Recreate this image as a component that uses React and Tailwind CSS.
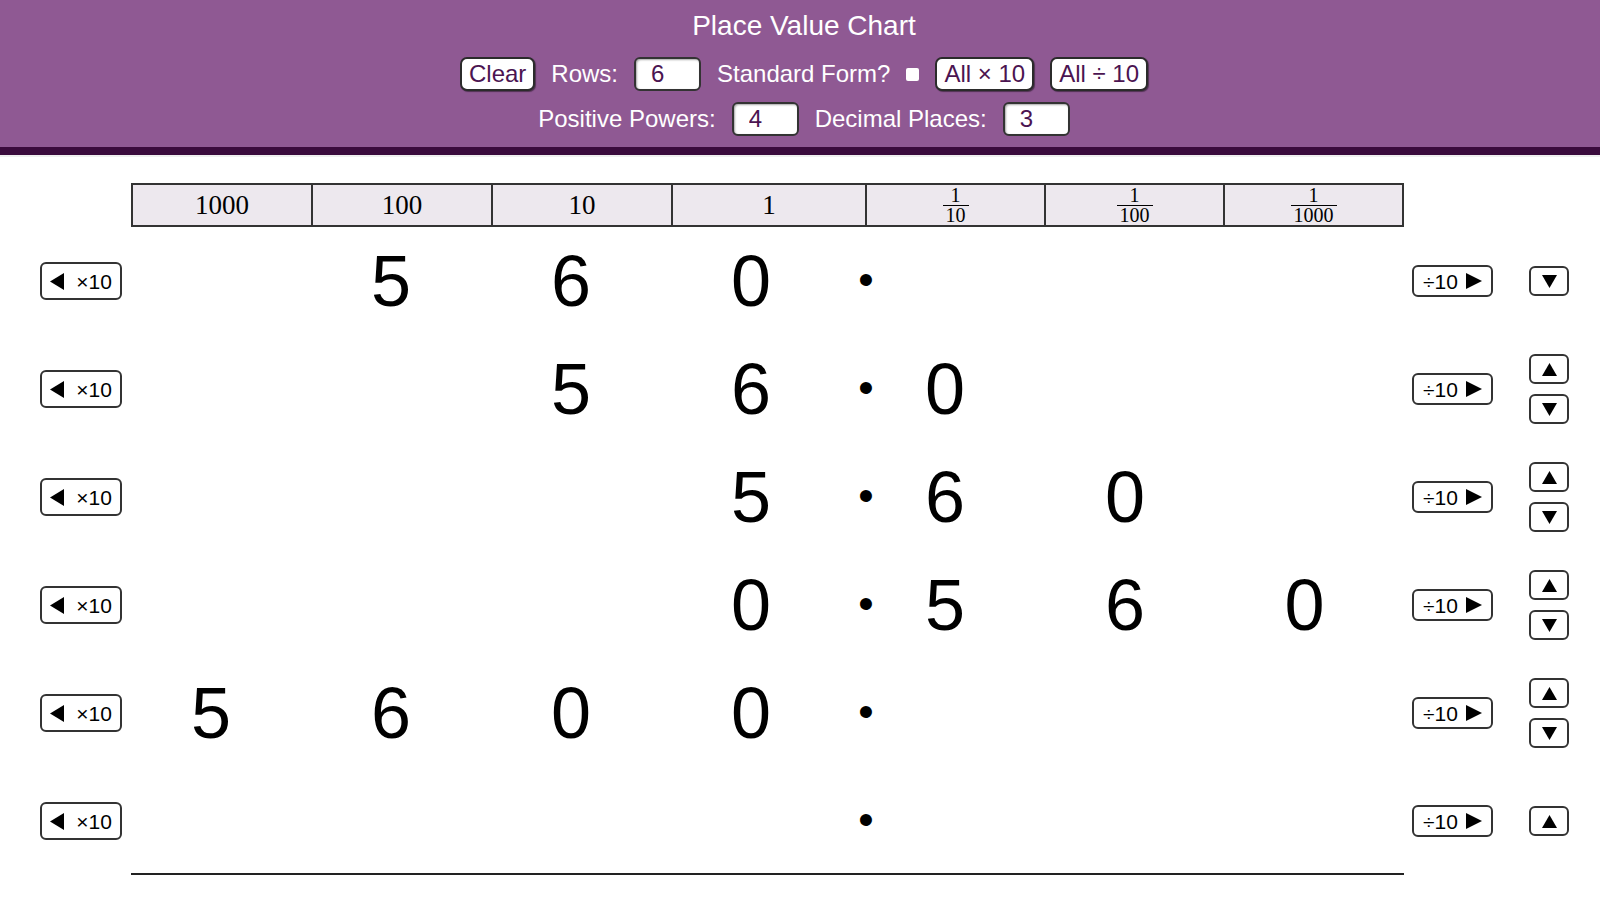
const rows = [
  { digits: ["", "5", "6", "0", "", "", ""], up: false, down: true },
  { digits: ["", "", "5", "6", "0", "", ""], up: true, down: true },
  { digits: ["", "", "", "5", "6", "0", ""], up: true, down: true },
  { digits: ["", "", "", "0", "5", "6", "0"], up: true, down: true },
  { digits: ["5", "6", "0", "0", "", "", ""], up: true, down: true },
  { digits: ["", "", "", "", "", "", ""], up: true, down: false },
];

const HeadButton = ({ children }) => (
  <button
    type="button"
    className="h-[34px] px-[7px] bg-white border-2 border-[#2b2b2b] rounded-[7px] text-[#4b1451] leading-none shadow-[1px_1px_1px_rgba(0,0,0,0.45)]"
  >
    {children}
  </button>
);

const NumInput = ({ value }) => (
  <input
    type="text"
    defaultValue={value}
    className="w-[67px] h-[34px] bg-white border-2 border-[#333] rounded-[6px] pl-[15px] text-[#4b1451] leading-none shadow-[inset_1px_1px_2px_rgba(0,0,0,0.35)] outline-none"
  />
);

const Fraction = ({ den }) => (
  <span className="inline-flex flex-col items-center text-[20px] leading-[15px]">
    <span>1</span>
    <span className="self-stretch h-px bg-black my-[2px] mx-[-3px]" />
    <span>{den}</span>
  </span>
);

const TriLeft = () => (
  <svg width="14" height="17" viewBox="0 0 14 17">
    <polygon points="14,0 14,17 0,8.5" fill="#000" />
  </svg>
);

const TriRight = () => (
  <svg width="16" height="16" viewBox="0 0 16 16">
    <polygon points="0,0 0,16 16,8" fill="#000" />
  </svg>
);

const TriUp = () => (
  <svg width="15" height="13" viewBox="0 0 15 13">
    <polygon points="0,13 15,13 7.5,0" fill="#000" />
  </svg>
);

const TriDown = () => (
  <svg width="15" height="13" viewBox="0 0 15 13">
    <polygon points="0,0 15,0 7.5,13" fill="#000" />
  </svg>
);

const SmallButton = ({ className, children }) => (
  <button
    type="button"
    className={
      "bg-white border-2 border-[#333] rounded-[6px] flex items-center justify-center text-black " +
      className
    }
  >
    {children}
  </button>
);

const ChartRow = ({ row }) => (
  <div className="flex items-center h-[108px]">
    <div className="w-[131px] pl-10">
      <SmallButton className="w-[82px] h-[38px] gap-[12px] text-[21px] leading-none">
        <TriLeft />
        <span>×10</span>
      </SmallButton>
    </div>

    <div className="grid grid-cols-[180px_180px_180px_194px_180px_180px_179px] items-center w-[1273px] h-full text-[72px] leading-none">
      {row.digits.map((d, i) =>
        i === 3 ? (
          <div key={i} className="flex items-center">
            <span className="w-[180px] text-center pr-5">{d}</span>
            <span className="w-[30px] -mr-4 mb-[3px] flex justify-center text-[44px] leading-none">•</span>
          </div>
        ) : (
          <span key={i} className="text-center pr-5">
            {d}
          </span>
        )
      )}
    </div>

    <SmallButton className="ml-2 w-[81px] h-[32px] gap-[8px] text-[21px] leading-none">
      <span>÷10</span>
      <TriRight />
    </SmallButton>

    <div className="ml-9 w-[40px] flex flex-col gap-[10px]">
      {row.up && (
        <SmallButton className="w-[40px] h-[30px]">
          <TriUp />
        </SmallButton>
      )}
      {row.down && (
        <SmallButton className="w-[40px] h-[30px]">
          <TriDown />
        </SmallButton>
      )}
    </div>
  </div>
);

const App = () => {
  return (
    <div className="min-h-screen bg-white font-['Liberation_Sans',Arial,sans-serif]">
      <header className="bg-[#8f5993] pl-2 pt-[10px] pb-3 text-white text-[24px]">
        <h1 className="text-center text-[28px] leading-[32px]">Place Value Chart</h1>

        <div className="mt-[15px] h-[34px] flex items-center justify-center gap-4">
          <HeadButton>Clear</HeadButton>
          <span>Rows:</span>
          <NumInput value="6" />
          <span>Standard Form?</span>
          <input
            type="checkbox"
            className="appearance-none w-[13px] h-[13px] bg-white rounded-[2px]"
          />
          <HeadButton>All × 10</HeadButton>
          <HeadButton>All ÷ 10</HeadButton>
        </div>

        <div className="mt-[11px] h-[33px] flex items-center justify-center gap-4">
          <span>Positive Powers:</span>
          <NumInput value="4" />
          <span>Decimal Places:</span>
          <NumInput value="3" />
        </div>
      </header>
      <div className="h-2 bg-[#3a0b3c]" />
      <div className="h-[2px] bg-[#efefef]" />

      <main className="pt-[26px] pb-10">
        <div className="ml-[131px] w-fit grid grid-cols-[178px_178px_178px_192px_177px_177px_177px] gap-[2px] p-[2px] bg-[#333] font-['Liberation_Serif',serif] text-black">
          {["1000", "100", "10", "1"].map((label) => (
            <div key={label} className="h-10 bg-[#ede8ee] flex items-center justify-center text-[27px] leading-none">
              {label}
            </div>
          ))}
          {["10", "100", "1000"].map((den) => (
            <div key={den} className="h-10 bg-[#ede8ee] flex items-center justify-center">
              <Fraction den={den} />
            </div>
          ))}
        </div>

        {rows.map((row, i) => (
          <ChartRow key={i} row={row} />
        ))}

        <div className="ml-[131px] w-[1273px] -mt-[2px] border-t-2 border-[#222]" />
      </main>
    </div>
  );
};

export default App;
